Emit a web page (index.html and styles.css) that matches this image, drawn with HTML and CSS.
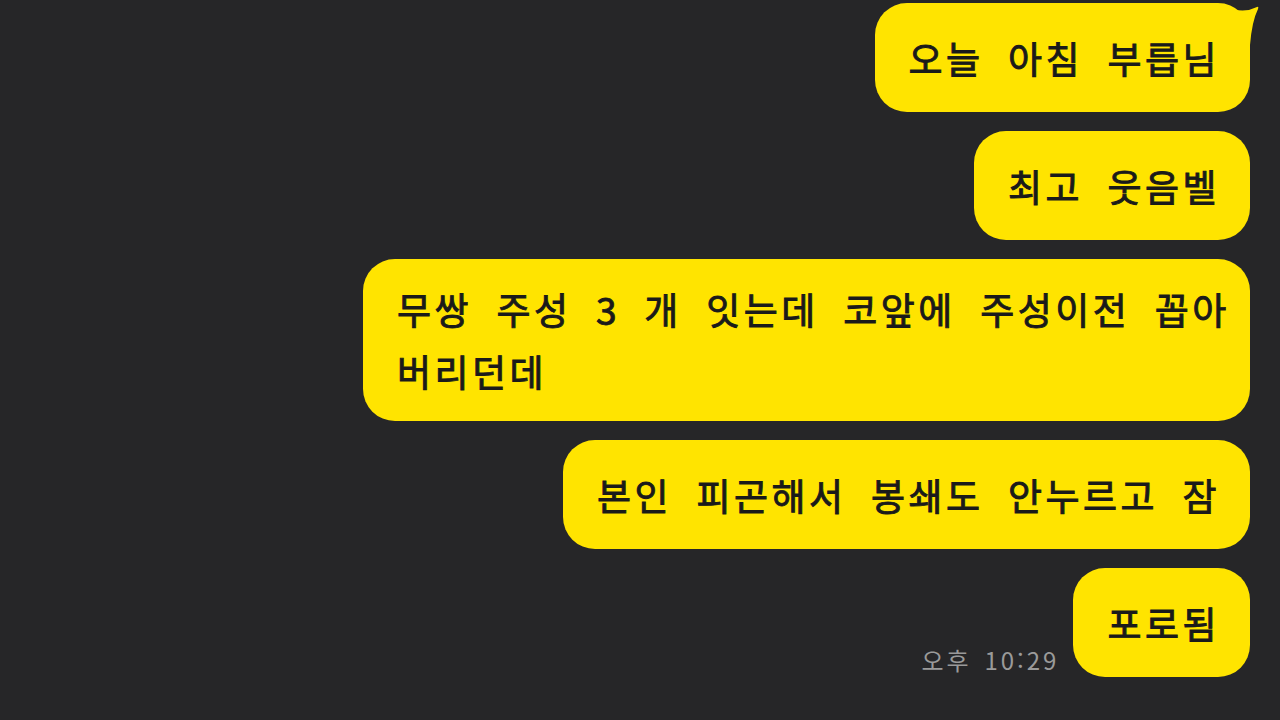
FILE: index.html
```html
<!DOCTYPE html>
<html lang="ko">
<head>
    <meta charset="UTF-8">
    <meta name="viewport" content="width=device-width, initial-scale=1.0">
    <title>채팅</title>
    <link rel="stylesheet" href="styles.css">
</head>
<body>
    <div class="chat">
        <div class="row">
            <div class="bubble first">
                오늘 아침 부릅님
                <svg class="tail" width="26" height="40" viewBox="0 0 26 40">
                    <path d="M0 4 Q12 8 24 2 Q26 1 25 4 Q19 16 17 40 L0 40 Z" fill="#ffe400"/>
                </svg>
            </div>
        </div>
        <div class="row">
            <div class="bubble">최고 웃음벨</div>
        </div>
        <div class="row">
            <div class="bubble wide">무쌍 주성 3 개 잇는데 코앞에 주성이전 꼽아<br>버리던데</div>
        </div>
        <div class="row">
            <div class="bubble">본인 피곤해서 봉쇄도 안누르고 잠</div>
        </div>
        <div class="row">
            <span class="time">오후 10:29</span>
            <div class="bubble">포로됨</div>
        </div>
    </div>
</body>
</html>
```

FILE: styles.css
```css
/* Page */
* {
    margin: 0;
    padding: 0;
    box-sizing: border-box;
}

body {
    width: 1280px;
    height: 720px;
    overflow: hidden;
    background: #262628;
    font-family: 'Noto Sans CJK KR', 'Noto Sans', sans-serif;
}

/* Message column */
.chat {
    display: flex;
    flex-direction: column;
    align-items: flex-end;
    gap: 19px;
    padding: 3px 30px 0 0;
}

.row {
    display: flex;
    align-items: flex-end;
    gap: 14px;
}

/* Bubbles */
.bubble {
    position: relative;
    display: flex;
    align-items: center;
    min-height: 109px;
    padding: 19px 30px 19px 34px;
    background: #ffe400;
    border-radius: 32px;
    color: #1a1a1a;
    font-size: 37px;
    font-weight: 400;
    -webkit-text-stroke: 0.9px #1a1a1a;
    line-height: 62px;
    letter-spacing: 3.5px;
    word-spacing: 10.5px;
    white-space: nowrap;
}

.bubble.wide {
    display: block;
    width: 887px;
}

.tail {
    position: absolute;
    top: 2px;
    right: -9px;
}

/* Timestamp */
.time {
    color: #9a9a9a;
    font-size: 24px;
    line-height: 30px;
    letter-spacing: 3px;
    word-spacing: 3px;
    margin-bottom: 2px;
}
```
